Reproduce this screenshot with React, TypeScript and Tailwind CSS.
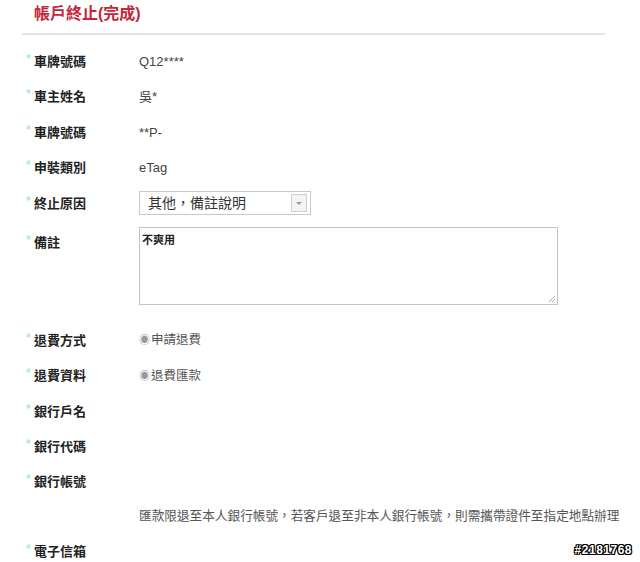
import React from 'react';

const cjk = "font-['Liberation_Sans','Noto_Sans_CJK_TC',sans-serif]";

function Label({ text }: { text: string }) {
  return (
    <div className="relative w-[117px] shrink-0 pl-[12px] text-[13px] font-bold text-[#222]">
      <span className="absolute left-[4px] top-[-2px] text-[12px] font-bold text-[#b5e2ef]">*</span>
      {text}
    </div>
  );
}

function Row({ label, children }: { label: string; children?: React.ReactNode }) {
  return (
    <div className="flex h-[35.4px] items-center">
      <Label text={label} />
      <div className="text-[13px] text-[#444]">{children}</div>
    </div>
  );
}

function Radio({ text }: { text: string }) {
  return (
    <span className="flex items-center text-[12.5px] text-[#555]">
      <span className="mr-[1px] text-[11px] text-[#999]">◉</span>
      {text}
    </span>
  );
}

export default function App() {
  return (
    <div className={`relative h-[562px] w-[640px] overflow-hidden bg-white ${cjk}`}>
      <div className="pl-[22px]">
        <div className="w-[583px] border-b-2 border-[#e2e2e2] pb-[9px] pl-[12px] pt-[4px]">
          <h1 className="text-[16px] font-bold leading-[20px] text-[#c4263c]">帳戶終止(完成)</h1>
        </div>
        <div className="pt-[9px]">
          <Row label="車牌號碼">Q12****</Row>
          <Row label="車主姓名">吳*</Row>
          <Row label="車牌號碼">**P-</Row>
          <Row label="申裝類別">eTag</Row>
          <Row label="終止原因">
            <div className="flex h-[24px] w-[172px] items-center justify-between border border-[#c8c8c8] bg-white pl-[8px] pr-[3px]">
              <span className="text-[14px] text-[#333]">其他，備註說明</span>
              <span className="flex h-[18px] w-[16px] items-center justify-center border border-[#d0d0d0] bg-[#f4f4f4]">
                <span className="h-0 w-0 border-x-[3px] border-t-[3px] border-x-transparent border-t-[#999]" />
              </span>
            </div>
          </Row>
          <div className="flex pt-[6px] pb-[18px]">
            <div className="pt-[6px]">
              <Label text="備註" />
            </div>
            <div className="relative h-[78px] w-[419px] border border-[#c4c4c4] px-[2px] pt-[4px] text-[11px] font-bold text-[#222]">
              不爽用
              <svg className="absolute bottom-[1px] right-[1px]" width="8" height="8" viewBox="0 0 8 8">
                <path d="M7 1L1 7M7 4L4 7" stroke="#aaa" strokeWidth="1" />
              </svg>
            </div>
          </div>
          <Row label="退費方式">
            <Radio text="申請退費" />
          </Row>
          <Row label="退費資料">
            <Radio text="退費匯款" />
          </Row>
          <Row label="銀行戶名" />
          <Row label="銀行代碼" />
          <Row label="銀行帳號" />
          <div className="flex h-[34px] items-center pl-[117px] text-[12.65px] text-[#555]">
            匯款限退至本人銀行帳號，若客戶退至非本人銀行帳號，則需攜帶證件至指定地點辦理
          </div>
          <Row label="電子信箱" />
        </div>
      </div>
      <div className="absolute bottom-[3px] right-[8px] text-[12px] font-bold tracking-[0.5px] text-white [text-shadow:1px_0_0_#000,-1px_0_0_#000,0_1px_0_#000,0_-1px_0_#000,1px_1px_0_#000,-1px_-1px_0_#000,1px_-1px_0_#000,-1px_1px_0_#000]">
        #2181768
      </div>
    </div>
  );
}
